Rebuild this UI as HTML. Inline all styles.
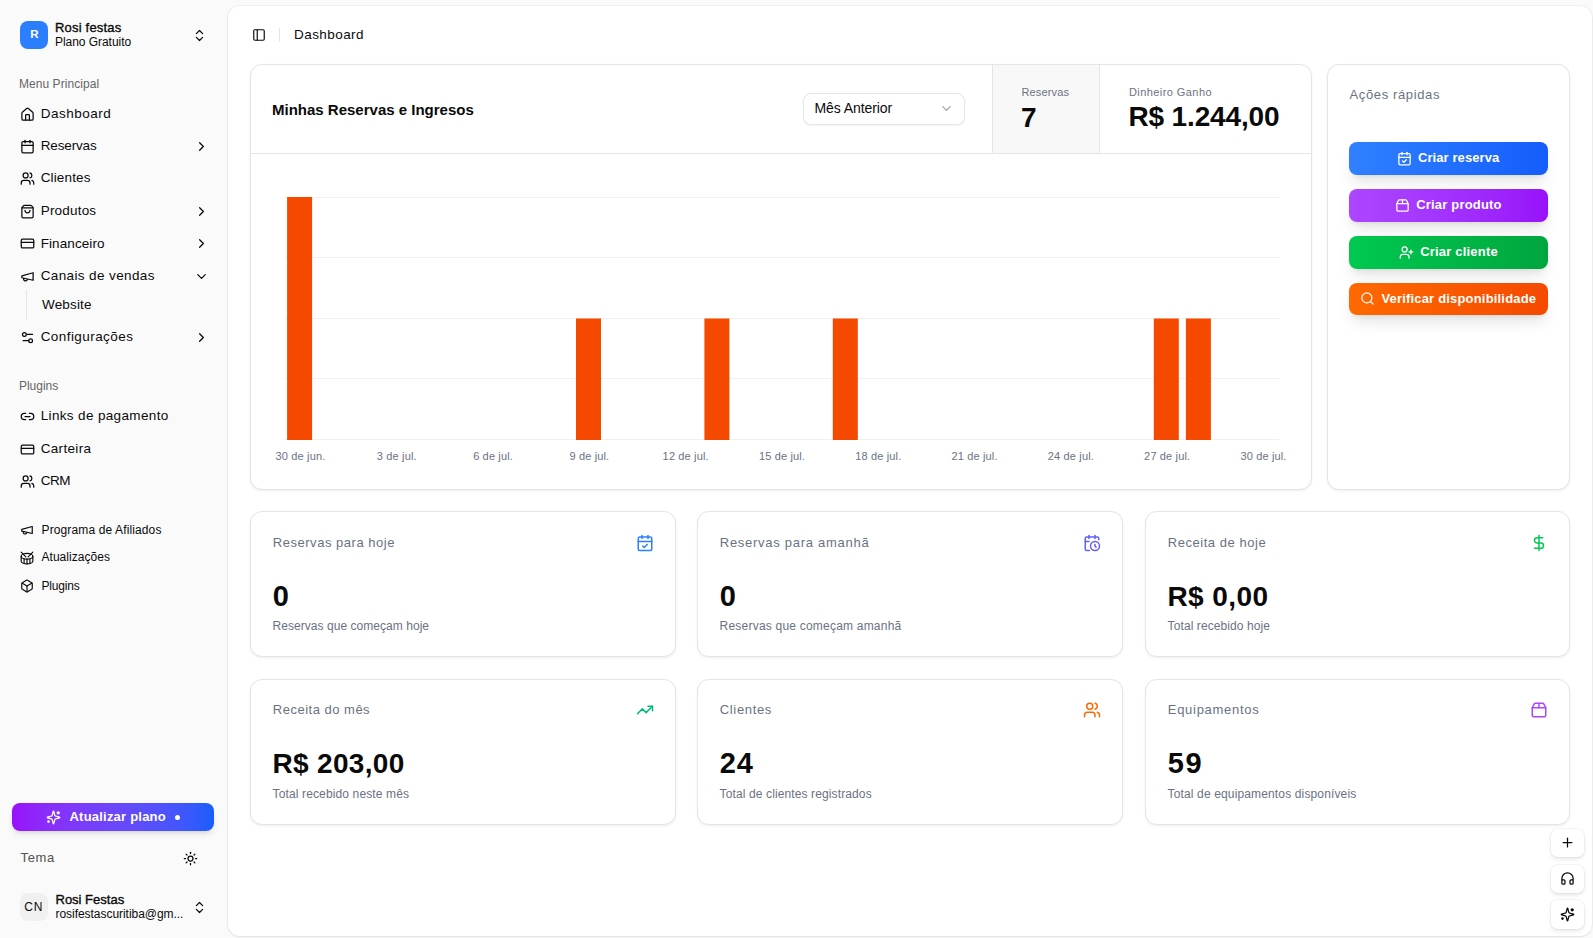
<!DOCTYPE html>
<html><head><meta charset="utf-8"><title>Dashboard</title>
<style>
html,body{margin:0;padding:0;}
body{width:1593px;height:938px;overflow:hidden;position:relative;background:#fafafa;font-family:"Liberation Sans",sans-serif;}
.t{position:absolute;line-height:1;white-space:nowrap;}
.ic{position:absolute;}
</style></head><body>
<div style="position:absolute;left:20px;top:21px;width:28px;height:28px;border-radius:8px;background:#2b7fff;"></div>
<div class="t" style="left:30.20px;top:29.34px;font-size:11.5px;font-weight:700;color:#fff;letter-spacing:0px;">R</div>
<div class="t" style="left:55.00px;top:21.08px;font-size:13px;font-weight:400;color:#0a0a0a;letter-spacing:0.2px;-webkit-text-stroke:0.35px #0a0a0a;">Rosi festas</div>
<div class="t" style="left:55.00px;top:35.92px;font-size:12px;font-weight:400;color:#0a0a0a;letter-spacing:-0.046px;">Plano Gratuito</div>
<svg class="ic" style="left:191.5px;top:27.5px" width="15" height="15" viewBox="0 0 24 24" fill="none" color="#0a0a0a" stroke="#0a0a0a" stroke-width="2" stroke-linecap="round" stroke-linejoin="round"><path d="m7 15 5 5 5-5"/><path d="m7 9 5-5 5 5"/></svg>
<div class="t" style="left:19.00px;top:77.92px;font-size:12px;font-weight:400;color:#666666;letter-spacing:0.054px;">Menu Principal</div>
<svg class="ic" style="left:19.5px;top:106.5px" width="15" height="15" viewBox="0 0 24 24" fill="none" color="#0a0a0a" stroke="#0a0a0a" stroke-width="2" stroke-linecap="round" stroke-linejoin="round"><path d="M15 21v-8a1 1 0 0 0-1-1h-4a1 1 0 0 0-1 1v8"/><path d="M3 10a2 2 0 0 1 .709-1.528l7-5.999a2 2 0 0 1 2.582 0l7 5.999A2 2 0 0 1 21 10v9a2 2 0 0 1-2 2H5a2 2 0 0 1-2-2z"/></svg>
<div class="t" style="left:40.70px;top:106.66px;font-size:13.5px;font-weight:400;color:#0a0a0a;letter-spacing:0.5px;">Dashboard</div>
<svg class="ic" style="left:19.5px;top:139.0px" width="15" height="15" viewBox="0 0 24 24" fill="none" color="#0a0a0a" stroke="#0a0a0a" stroke-width="2" stroke-linecap="round" stroke-linejoin="round"><path d="M8 2v4"/><path d="M16 2v4"/><rect width="18" height="18" x="3" y="4" rx="2"/><path d="M3 10h18"/></svg>
<div class="t" style="left:40.70px;top:139.16px;font-size:13.5px;font-weight:400;color:#0a0a0a;letter-spacing:-0.143px;">Reservas</div>
<svg class="ic" style="left:193.5px;top:139.0px" width="15" height="15" viewBox="0 0 24 24" fill="none" color="#0a0a0a" stroke="#0a0a0a" stroke-width="2" stroke-linecap="round" stroke-linejoin="round"><path d="m9 18 6-6-6-6"/></svg>
<svg class="ic" style="left:19.5px;top:171.2px" width="15" height="15" viewBox="0 0 24 24" fill="none" color="#0a0a0a" stroke="#0a0a0a" stroke-width="2" stroke-linecap="round" stroke-linejoin="round"><path d="M16 21v-2a4 4 0 0 0-4-4H6a4 4 0 0 0-4 4v2"/><path d="M16 3.128a4 4 0 0 1 0 7.744"/><path d="M22 21v-2a4 4 0 0 0-3-3.87"/><circle cx="9" cy="7" r="4"/></svg>
<div class="t" style="left:40.70px;top:171.36px;font-size:13.5px;font-weight:400;color:#0a0a0a;letter-spacing:0.143px;">Clientes</div>
<svg class="ic" style="left:19.5px;top:203.7px" width="15" height="15" viewBox="0 0 24 24" fill="none" color="#0a0a0a" stroke="#0a0a0a" stroke-width="2" stroke-linecap="round" stroke-linejoin="round"><path d="M16 10a4 4 0 0 1-8 0"/><path d="M3.103 6.034h17.794"/><path d="M3.4 5.467a2 2 0 0 0-.4 1.2V20a2 2 0 0 0 2 2h14a2 2 0 0 0 2-2V6.667a2 2 0 0 0-.4-1.2l-2-2.667A2 2 0 0 0 17 2H7a2 2 0 0 0-1.6.8z"/></svg>
<div class="t" style="left:40.70px;top:203.86px;font-size:13.5px;font-weight:400;color:#0a0a0a;letter-spacing:0.2px;">Produtos</div>
<svg class="ic" style="left:193.5px;top:203.7px" width="15" height="15" viewBox="0 0 24 24" fill="none" color="#0a0a0a" stroke="#0a0a0a" stroke-width="2" stroke-linecap="round" stroke-linejoin="round"><path d="m9 18 6-6-6-6"/></svg>
<svg class="ic" style="left:19.5px;top:236.4px" width="15" height="15" viewBox="0 0 24 24" fill="none" color="#0a0a0a" stroke="#0a0a0a" stroke-width="2" stroke-linecap="round" stroke-linejoin="round"><rect width="20" height="14" x="2" y="5" rx="2"/><line x1="2" x2="22" y1="10" y2="10"/></svg>
<div class="t" style="left:40.70px;top:236.56px;font-size:13.5px;font-weight:400;color:#0a0a0a;letter-spacing:0.089px;">Financeiro</div>
<svg class="ic" style="left:193.5px;top:236.4px" width="15" height="15" viewBox="0 0 24 24" fill="none" color="#0a0a0a" stroke="#0a0a0a" stroke-width="2" stroke-linecap="round" stroke-linejoin="round"><path d="m9 18 6-6-6-6"/></svg>
<svg class="ic" style="left:19.5px;top:268.6px" width="15" height="15" viewBox="0 0 24 24" fill="none" color="#0a0a0a" stroke="#0a0a0a" stroke-width="2" stroke-linecap="round" stroke-linejoin="round"><path d="m3 11 18-5v12L3 14v-3z"/><path d="M11.6 16.8a3 3 0 1 1-5.8-1.6"/></svg>
<div class="t" style="left:40.70px;top:268.76px;font-size:13.5px;font-weight:400;color:#0a0a0a;letter-spacing:0.38px;">Canais de vendas</div>
<svg class="ic" style="left:193.5px;top:268.6px" width="15" height="15" viewBox="0 0 24 24" fill="none" color="#0a0a0a" stroke="#0a0a0a" stroke-width="2" stroke-linecap="round" stroke-linejoin="round"><path d="m6 9 6 6 6-6"/></svg>
<div style="position:absolute;left:26px;top:290px;width:1px;height:29px;background:#e5e5e5"></div>
<div class="t" style="left:42.00px;top:297.66px;font-size:13.5px;font-weight:400;color:#0a0a0a;letter-spacing:0.167px;">Website</div>
<svg class="ic" style="left:19.5px;top:329.8px" width="15" height="15" viewBox="0 0 24 24" fill="none" color="#0a0a0a" stroke="#0a0a0a" stroke-width="2" stroke-linecap="round" stroke-linejoin="round"><path d="M20 7h-9"/><path d="M14 17H5"/><circle cx="17" cy="17" r="3"/><circle cx="7" cy="7" r="3"/></svg>
<div class="t" style="left:40.70px;top:329.96px;font-size:13.5px;font-weight:400;color:#0a0a0a;letter-spacing:0.433px;">Configurações</div>
<svg class="ic" style="left:193.5px;top:329.8px" width="15" height="15" viewBox="0 0 24 24" fill="none" color="#0a0a0a" stroke="#0a0a0a" stroke-width="2" stroke-linecap="round" stroke-linejoin="round"><path d="m9 18 6-6-6-6"/></svg>
<div class="t" style="left:19.00px;top:379.92px;font-size:12px;font-weight:400;color:#666666;letter-spacing:-0.033px;">Plugins</div>
<svg class="ic" style="left:19.5px;top:408.8px" width="15" height="15" viewBox="0 0 24 24" fill="none" color="#0a0a0a" stroke="#0a0a0a" stroke-width="2" stroke-linecap="round" stroke-linejoin="round"><path d="M9 17H7A5 5 0 0 1 7 7h2"/><path d="M15 7h2a5 5 0 1 1 0 10h-2"/><line x1="8" x2="16" y1="12" y2="12"/></svg>
<div class="t" style="left:40.70px;top:408.96px;font-size:13.5px;font-weight:400;color:#0a0a0a;letter-spacing:0.353px;">Links de pagamento</div>
<svg class="ic" style="left:19.5px;top:441.9px" width="15" height="15" viewBox="0 0 24 24" fill="none" color="#0a0a0a" stroke="#0a0a0a" stroke-width="2" stroke-linecap="round" stroke-linejoin="round"><rect width="20" height="14" x="2" y="5" rx="2"/><line x1="2" x2="22" y1="10" y2="10"/></svg>
<div class="t" style="left:40.70px;top:442.06px;font-size:13.5px;font-weight:400;color:#0a0a0a;letter-spacing:0.329px;">Carteira</div>
<svg class="ic" style="left:19.5px;top:473.8px" width="15" height="15" viewBox="0 0 24 24" fill="none" color="#0a0a0a" stroke="#0a0a0a" stroke-width="2" stroke-linecap="round" stroke-linejoin="round"><path d="M16 21v-2a4 4 0 0 0-4-4H6a4 4 0 0 0-4 4v2"/><path d="M16 3.128a4 4 0 0 1 0 7.744"/><path d="M22 21v-2a4 4 0 0 0-3-3.87"/><circle cx="9" cy="7" r="4"/></svg>
<div class="t" style="left:40.70px;top:473.96px;font-size:13.5px;font-weight:400;color:#0a0a0a;letter-spacing:-0.45px;">CRM</div>
<svg class="ic" style="left:20.2px;top:523.0px" width="14" height="14" viewBox="0 0 24 24" fill="none" color="#0a0a0a" stroke="#0a0a0a" stroke-width="2" stroke-linecap="round" stroke-linejoin="round"><path d="m3 11 18-5v12L3 14v-3z"/><path d="M11.6 16.8a3 3 0 1 1-5.8-1.6"/></svg>
<div class="t" style="left:41.50px;top:523.52px;font-size:12px;font-weight:400;color:#0a0a0a;letter-spacing:0.125px;">Programa de Afiliados</div>
<svg class="ic" style="left:20.2px;top:550.6999999999999px" width="14" height="14" viewBox="0 0 24 24" fill="none" color="#0a0a0a" stroke="#0a0a0a" stroke-width="2" stroke-linecap="round" stroke-linejoin="round"><path d="m2 2 8 8"/><path d="m22 2-8 8"/><ellipse cx="12" cy="9" rx="10" ry="5"/><path d="M7 13.4v7.9"/><path d="M12 14v8"/><path d="M17 13.4v7.9"/><path d="M2 9v8a10 5 0 0 0 20 0V9"/></svg>
<div class="t" style="left:41.50px;top:551.22px;font-size:12px;font-weight:400;color:#0a0a0a;letter-spacing:0.036px;">Atualizações</div>
<svg class="ic" style="left:20.2px;top:579.4px" width="14" height="14" viewBox="0 0 24 24" fill="none" color="#0a0a0a" stroke="#0a0a0a" stroke-width="2" stroke-linecap="round" stroke-linejoin="round"><path d="M21 8a2 2 0 0 0-1-1.73l-7-4a2 2 0 0 0-2 0l-7 4A2 2 0 0 0 3 8v8a2 2 0 0 0 1 1.73l7 4a2 2 0 0 0 2 0l7-4A2 2 0 0 0 21 16Z"/><path d="m3.3 7 8.7 5 8.7-5"/><path d="M12 22V12"/></svg>
<div class="t" style="left:41.50px;top:579.92px;font-size:12px;font-weight:400;color:#0a0a0a;letter-spacing:-0.167px;">Plugins</div>
<div style="position:absolute;left:12px;top:803px;width:202px;height:28px;border-radius:8px;background:linear-gradient(to right in oklab,#9810fa,#155dfc);box-shadow:0 4px 6px -1px rgba(0,0,0,.1),0 2px 4px -2px rgba(0,0,0,.1)"></div>
<svg class="ic" style="left:45.5px;top:809.5px" width="15" height="15" viewBox="0 0 24 24" fill="none" color="#fff" stroke="#fff" stroke-width="2" stroke-linecap="round" stroke-linejoin="round"><path d="M9.937 15.5A2 2 0 0 0 8.5 14.063l-6.135-1.582a.5.5 0 0 1 0-.962L8.5 9.936A2 2 0 0 0 9.937 8.5l1.582-6.135a.5.5 0 0 1 .963 0L14.063 8.5A2 2 0 0 0 15.5 9.937l6.135 1.581a.5.5 0 0 1 0 .964L15.5 14.063a2 2 0 0 0-1.437 1.437l-1.582 6.135a.5.5 0 0 1-.963 0z"/><circle cx="19.5" cy="4.5" r="1.6" fill="currentColor"/><circle cx="4" cy="18.5" r="1.1" fill="currentColor"/></svg>
<div class="t" style="left:69.50px;top:810.28px;font-size:13px;font-weight:700;color:#fff;letter-spacing:0.214px;">Atualizar plano</div>
<div style="position:absolute;left:175px;top:814.5px;width:5px;height:5px;border-radius:50%;background:#fff"></div>
<div class="t" style="left:20.50px;top:851.38px;font-size:13px;font-weight:400;color:#525252;letter-spacing:0.667px;">Tema</div>
<svg class="ic" style="left:182.5px;top:850.5px" width="15" height="15" viewBox="0 0 24 24" fill="none" color="#0a0a0a" stroke="#0a0a0a" stroke-width="2" stroke-linecap="round" stroke-linejoin="round"><circle cx="12" cy="12" r="4"/><path d="M12 2v2"/><path d="M12 20v2"/><path d="m4.93 4.93 1.41 1.41"/><path d="m17.66 17.66 1.41 1.41"/><path d="M2 12h2"/><path d="M20 12h2"/><path d="m6.34 17.66-1.41 1.41"/><path d="m19.07 4.93-1.41 1.41"/></svg>
<div style="position:absolute;left:20px;top:893px;width:28px;height:28px;border-radius:8px;background:#f0f0f0"></div>
<div class="t" style="left:24.20px;top:900.62px;font-size:12px;font-weight:400;color:#0a0a0a;letter-spacing:1.0px;">CN</div>
<div class="t" style="left:55.50px;top:893.08px;font-size:13px;font-weight:400;color:#0a0a0a;letter-spacing:0.0px;-webkit-text-stroke:0.35px #0a0a0a;">Rosi Festas</div>
<div class="t" style="left:55.50px;top:907.72px;font-size:12px;font-weight:400;color:#0a0a0a;letter-spacing:-0.043px;">rosifestascuritiba@gm...</div>
<svg class="ic" style="left:191.5px;top:899.5px" width="15" height="15" viewBox="0 0 24 24" fill="none" color="#0a0a0a" stroke="#0a0a0a" stroke-width="2" stroke-linecap="round" stroke-linejoin="round"><path d="m7 15 5 5 5-5"/><path d="m7 9 5-5 5 5"/></svg>
<div style="position:absolute;left:228px;top:6px;width:1364px;height:930px;border-radius:12px;background:#fff;box-shadow:0 1px 3px rgba(0,0,0,.08),0 0 0 1px rgba(0,0,0,.03)"></div>
<svg class="ic" style="left:252px;top:28px" width="14" height="14" viewBox="0 0 24 24" fill="none" color="#0a0a0a" stroke="#0a0a0a" stroke-width="2" stroke-linecap="round" stroke-linejoin="round"><rect width="18" height="18" x="3" y="3" rx="2"/><path d="M9 3v18"/></svg>
<div style="position:absolute;left:279px;top:28px;width:1px;height:14px;background:#e5e5e5"></div>
<div class="t" style="left:294.00px;top:27.66px;font-size:13.5px;font-weight:400;color:#0a0a0a;letter-spacing:0.438px;">Dashboard</div>
<div style="position:absolute;background:#fff;border:1px solid #e5e5e5;border-radius:12px;box-shadow:0 1px 3px rgba(0,0,0,.06),0 1px 2px -1px rgba(0,0,0,.06);box-sizing:border-box;left:250px;top:64px;width:1062px;height:426px;overflow:hidden"><div style="position:absolute;left:0;top:88px;width:100%;height:1px;background:#e5e5e5"></div><div style="position:absolute;left:741px;top:0;width:106px;height:88px;background:#f8f8f8;border-left:1px solid #e5e5e5;border-right:1px solid #e5e5e5"></div></div>
<div class="t" style="left:272.00px;top:101.50px;font-size:15px;font-weight:700;color:#0a0a0a;letter-spacing:0.0px;">Minhas Reservas e Ingresos</div>
<div style="position:absolute;left:803px;top:93px;width:162px;height:32px;box-sizing:border-box;border:1px solid #e5e5e5;border-radius:8px;background:#fff;box-shadow:0 1px 2px rgba(0,0,0,.05)"></div>
<div class="t" style="left:814.50px;top:101.44px;font-size:14px;font-weight:400;color:#0a0a0a;letter-spacing:-0.091px;">Mês Anterior</div>
<svg class="ic" style="left:938.5px;top:101px" width="15" height="15" viewBox="0 0 24 24" fill="none" color="#a3a3a3" stroke="#a3a3a3" stroke-width="2" stroke-linecap="round" stroke-linejoin="round"><path d="m6 9 6 6 6-6"/></svg>
<div class="t" style="left:1021.50px;top:86.86px;font-size:11px;font-weight:400;color:#6a7282;letter-spacing:0.143px;">Reservas</div>
<div class="t" style="left:1021.00px;top:103.88px;font-size:28px;font-weight:700;color:#0a0a0a;letter-spacing:0px;">7</div>
<div class="t" style="left:1129.00px;top:86.56px;font-size:11px;font-weight:400;color:#6a7282;letter-spacing:0.423px;">Dinheiro Ganho</div>
<div class="t" style="left:1128.50px;top:103.08px;font-size:28px;font-weight:700;color:#0a0a0a;letter-spacing:-0.15px;">R$ 1.244,00</div>
<svg style="position:absolute;left:0;top:0" width="1593" height="938"><line x1="284" x2="1279" y1="197.5" y2="197.5" stroke="#f0f0f0" stroke-width="1"/><line x1="284" x2="1279" y1="257.5" y2="257.5" stroke="#f0f0f0" stroke-width="1"/><line x1="284" x2="1279" y1="318.5" y2="318.5" stroke="#f0f0f0" stroke-width="1"/><line x1="284" x2="1279" y1="378.5" y2="378.5" stroke="#f0f0f0" stroke-width="1"/><line x1="284" x2="1279" y1="439.5" y2="439.5" stroke="#f0f0f0" stroke-width="1"/><rect x="287.1" y="197.0" width="25" height="243.0" fill="#f54900"/><rect x="576.0" y="318.5" width="25" height="121.5" fill="#f54900"/><rect x="704.4" y="318.5" width="25" height="121.5" fill="#f54900"/><rect x="832.8" y="318.5" width="25" height="121.5" fill="#f54900"/><rect x="1153.8" y="318.5" width="25" height="121.5" fill="#f54900"/><rect x="1185.9" y="318.5" width="25" height="121.5" fill="#f54900"/></svg>
<div class="t" style="left:240.5px;width:120px;text-align:center;top:450.66px;font-size:11px;color:#6a7282;letter-spacing:0.15px">30 de jun.</div>
<div class="t" style="left:336.8px;width:120px;text-align:center;top:450.66px;font-size:11px;color:#6a7282;letter-spacing:0.15px">3 de jul.</div>
<div class="t" style="left:433.1px;width:120px;text-align:center;top:450.66px;font-size:11px;color:#6a7282;letter-spacing:0.15px">6 de jul.</div>
<div class="t" style="left:529.4px;width:120px;text-align:center;top:450.66px;font-size:11px;color:#6a7282;letter-spacing:0.15px">9 de jul.</div>
<div class="t" style="left:625.7px;width:120px;text-align:center;top:450.66px;font-size:11px;color:#6a7282;letter-spacing:0.15px">12 de jul.</div>
<div class="t" style="left:722.0px;width:120px;text-align:center;top:450.66px;font-size:11px;color:#6a7282;letter-spacing:0.15px">15 de jul.</div>
<div class="t" style="left:818.3px;width:120px;text-align:center;top:450.66px;font-size:11px;color:#6a7282;letter-spacing:0.15px">18 de jul.</div>
<div class="t" style="left:914.6px;width:120px;text-align:center;top:450.66px;font-size:11px;color:#6a7282;letter-spacing:0.15px">21 de jul.</div>
<div class="t" style="left:1010.9px;width:120px;text-align:center;top:450.66px;font-size:11px;color:#6a7282;letter-spacing:0.15px">24 de jul.</div>
<div class="t" style="left:1107.2px;width:120px;text-align:center;top:450.66px;font-size:11px;color:#6a7282;letter-spacing:0.15px">27 de jul.</div>
<div class="t" style="left:1203.5px;width:120px;text-align:center;top:450.66px;font-size:11px;color:#6a7282;letter-spacing:0.15px">30 de jul.</div>
<div style="position:absolute;background:#fff;border:1px solid #e5e5e5;border-radius:12px;box-shadow:0 1px 3px rgba(0,0,0,.06),0 1px 2px -1px rgba(0,0,0,.06);box-sizing:border-box;left:1327px;top:64px;width:243px;height:426px"></div>
<div class="t" style="left:1349.50px;top:88.28px;font-size:13px;font-weight:400;color:#6a7282;letter-spacing:0.625px;">Ações rápidas</div>
<div style="position:absolute;left:1349px;top:142px;width:199px;height:32.5px;border-radius:8px;background:linear-gradient(to right in oklab,#3080ff,#155dfc);box-shadow:0 10px 15px -3px rgba(0,0,0,.1),0 4px 6px -4px rgba(0,0,0,.1)"></div>
<svg class="ic" style="left:1396.5px;top:150.75px" width="15" height="15" viewBox="0 0 24 24" fill="none" color="#fff" stroke="#fff" stroke-width="2" stroke-linecap="round" stroke-linejoin="round"><path d="M8 2v4"/><path d="M16 2v4"/><rect width="18" height="18" x="3" y="4" rx="2"/><path d="M3 10h18"/><path d="m9 16 2 2 4-4"/></svg>
<div class="t" style="left:1418.00px;top:151.18px;font-size:13px;font-weight:700;color:#fff;letter-spacing:0.083px;">Criar reserva</div>
<div style="position:absolute;left:1349px;top:189px;width:199px;height:32.5px;border-radius:8px;background:linear-gradient(to right in oklab,#ad46ff,#9810fa);box-shadow:0 10px 15px -3px rgba(0,0,0,.1),0 4px 6px -4px rgba(0,0,0,.1)"></div>
<svg class="ic" style="left:1394.8px;top:197.75px" width="15" height="15" viewBox="0 0 24 24" fill="none" color="#fff" stroke="#fff" stroke-width="2" stroke-linecap="round" stroke-linejoin="round"><path d="M3 9h18v10a2 2 0 0 1-2 2H5a2 2 0 0 1-2-2V9Z"/><path d="m3 9 2.45-4.9A2 2 0 0 1 7.24 3h9.52a2 2 0 0 1 1.8 1.1L21 9"/><path d="M12 3v6"/></svg>
<div class="t" style="left:1416.20px;top:198.18px;font-size:13px;font-weight:700;color:#fff;letter-spacing:0.192px;">Criar produto</div>
<div style="position:absolute;left:1349px;top:236px;width:199px;height:32.5px;border-radius:8px;background:linear-gradient(to right in oklab,#00c950,#00a63e);box-shadow:0 10px 15px -3px rgba(0,0,0,.1),0 4px 6px -4px rgba(0,0,0,.1)"></div>
<svg class="ic" style="left:1398.9px;top:244.75px" width="15" height="15" viewBox="0 0 24 24" fill="none" color="#fff" stroke="#fff" stroke-width="2" stroke-linecap="round" stroke-linejoin="round"><path d="M16 21v-2a4 4 0 0 0-4-4H6a4 4 0 0 0-4 4v2"/><circle cx="9" cy="7" r="4"/><line x1="19" x2="19" y1="8" y2="14"/><line x1="22" x2="16" y1="11" y2="11"/></svg>
<div class="t" style="left:1420.20px;top:245.18px;font-size:13px;font-weight:700;color:#fff;letter-spacing:0.192px;">Criar cliente</div>
<div style="position:absolute;left:1349px;top:282.5px;width:199px;height:32.5px;border-radius:8px;background:linear-gradient(to right in oklab,#ff6900,#f54900);box-shadow:0 10px 15px -3px rgba(0,0,0,.1),0 4px 6px -4px rgba(0,0,0,.1)"></div>
<svg class="ic" style="left:1359.5px;top:291.25px" width="15" height="15" viewBox="0 0 24 24" fill="none" color="#fff" stroke="#fff" stroke-width="2" stroke-linecap="round" stroke-linejoin="round"><circle cx="11" cy="11" r="8"/><path d="m21 21-4.3-4.3"/></svg>
<div class="t" style="left:1381.40px;top:291.68px;font-size:13px;font-weight:700;color:#fff;letter-spacing:0.183px;">Verificar disponibilidade</div>
<div style="position:absolute;background:#fff;border:1px solid #e5e5e5;border-radius:12px;box-shadow:0 1px 3px rgba(0,0,0,.06),0 1px 2px -1px rgba(0,0,0,.06);box-sizing:border-box;left:250px;top:511px;width:426px;height:146px"></div>
<div class="t" style="left:272.80px;top:535.68px;font-size:13px;font-weight:400;color:#6a7282;letter-spacing:0.529px;">Reservas para hoje</div>
<div class="t" style="left:272.80px;top:582.14px;font-size:29px;font-weight:700;color:#0a0a0a;letter-spacing:0px;">0</div>
<div class="t" style="left:272.60px;top:620.02px;font-size:12px;font-weight:400;color:#6a7282;letter-spacing:0.042px;">Reservas que começam hoje</div>
<svg class="ic" style="left:635.5px;top:533.8px" width="18" height="18" viewBox="0 0 24 24" fill="none" color="#2b7fff" stroke="#2b7fff" stroke-width="2" stroke-linecap="round" stroke-linejoin="round"><path d="M8 2v4"/><path d="M16 2v4"/><rect width="18" height="18" x="3" y="4" rx="2"/><path d="M3 10h18"/><path d="m9 16 2 2 4-4"/></svg>
<div style="position:absolute;background:#fff;border:1px solid #e5e5e5;border-radius:12px;box-shadow:0 1px 3px rgba(0,0,0,.06),0 1px 2px -1px rgba(0,0,0,.06);box-sizing:border-box;left:697px;top:511px;width:426px;height:146px"></div>
<div class="t" style="left:719.80px;top:535.68px;font-size:13px;font-weight:400;color:#6a7282;letter-spacing:0.726px;">Reservas para amanhã</div>
<div class="t" style="left:719.80px;top:582.14px;font-size:29px;font-weight:700;color:#0a0a0a;letter-spacing:0px;">0</div>
<div class="t" style="left:719.60px;top:620.02px;font-size:12px;font-weight:400;color:#6a7282;letter-spacing:0.212px;">Reservas que começam amanhã</div>
<svg class="ic" style="left:1082.5px;top:533.8px" width="18" height="18" viewBox="0 0 24 24" fill="none" color="#615fff" stroke="#615fff" stroke-width="2" stroke-linecap="round" stroke-linejoin="round"><path d="M21 7.5V6a2 2 0 0 0-2-2H5a2 2 0 0 0-2 2v14a2 2 0 0 0 2 2h3.5"/><path d="M16 2v4"/><path d="M8 2v4"/><path d="M3 10h5"/><path d="M17.5 17.5 16 16.3V14"/><circle cx="16" cy="16" r="6"/></svg>
<div style="position:absolute;background:#fff;border:1px solid #e5e5e5;border-radius:12px;box-shadow:0 1px 3px rgba(0,0,0,.06),0 1px 2px -1px rgba(0,0,0,.06);box-sizing:border-box;left:1145px;top:511px;width:425px;height:146px"></div>
<div class="t" style="left:1167.80px;top:535.68px;font-size:13px;font-weight:400;color:#6a7282;letter-spacing:0.536px;">Receita de hoje</div>
<div class="t" style="left:1167.40px;top:582.78px;font-size:28px;font-weight:700;color:#0a0a0a;letter-spacing:0.433px;">R$ 0,00</div>
<div class="t" style="left:1167.60px;top:620.02px;font-size:12px;font-weight:400;color:#6a7282;letter-spacing:0.094px;">Total recebido hoje</div>
<svg class="ic" style="left:1529.5px;top:533.8px" width="18" height="18" viewBox="0 0 24 24" fill="none" color="#00c950" stroke="#00c950" stroke-width="2" stroke-linecap="round" stroke-linejoin="round"><line x1="12" x2="12" y1="2" y2="22"/><path d="M17 5H9.5a3.5 3.5 0 0 0 0 7h5a3.5 3.5 0 0 1 0 7H6"/></svg>
<div style="position:absolute;background:#fff;border:1px solid #e5e5e5;border-radius:12px;box-shadow:0 1px 3px rgba(0,0,0,.06),0 1px 2px -1px rgba(0,0,0,.06);box-sizing:border-box;left:250px;top:679px;width:426px;height:146px"></div>
<div class="t" style="left:272.80px;top:703.08px;font-size:13px;font-weight:400;color:#6a7282;letter-spacing:0.5px;">Receita do mês</div>
<div class="t" style="left:272.40px;top:750.08px;font-size:28px;font-weight:700;color:#0a0a0a;letter-spacing:0.337px;">R$ 203,00</div>
<div class="t" style="left:272.60px;top:787.52px;font-size:12px;font-weight:400;color:#6a7282;letter-spacing:0.13px;">Total recebido neste mês</div>
<svg class="ic" style="left:635.5px;top:700.9px" width="18" height="18" viewBox="0 0 24 24" fill="none" color="#00bc7d" stroke="#00bc7d" stroke-width="2" stroke-linecap="round" stroke-linejoin="round"><polyline points="22 7 13.5 15.5 8.5 10.5 2 17"/><polyline points="16 7 22 7 22 13"/></svg>
<div style="position:absolute;background:#fff;border:1px solid #e5e5e5;border-radius:12px;box-shadow:0 1px 3px rgba(0,0,0,.06),0 1px 2px -1px rgba(0,0,0,.06);box-sizing:border-box;left:697px;top:679px;width:426px;height:146px"></div>
<div class="t" style="left:719.80px;top:703.08px;font-size:13px;font-weight:400;color:#6a7282;letter-spacing:0.643px;">Clientes</div>
<div class="t" style="left:719.80px;top:749.44px;font-size:29px;font-weight:700;color:#0a0a0a;letter-spacing:0.8px;">24</div>
<div class="t" style="left:719.60px;top:787.52px;font-size:12px;font-weight:400;color:#6a7282;letter-spacing:0.118px;">Total de clientes registrados</div>
<svg class="ic" style="left:1082.5px;top:700.9px" width="18" height="18" viewBox="0 0 24 24" fill="none" color="#ff6900" stroke="#ff6900" stroke-width="2" stroke-linecap="round" stroke-linejoin="round"><path d="M16 21v-2a4 4 0 0 0-4-4H6a4 4 0 0 0-4 4v2"/><path d="M16 3.128a4 4 0 0 1 0 7.744"/><path d="M22 21v-2a4 4 0 0 0-3-3.87"/><circle cx="9" cy="7" r="4"/></svg>
<div style="position:absolute;background:#fff;border:1px solid #e5e5e5;border-radius:12px;box-shadow:0 1px 3px rgba(0,0,0,.06),0 1px 2px -1px rgba(0,0,0,.06);box-sizing:border-box;left:1145px;top:679px;width:425px;height:146px"></div>
<div class="t" style="left:1167.80px;top:703.08px;font-size:13px;font-weight:400;color:#6a7282;letter-spacing:0.709px;">Equipamentos</div>
<div class="t" style="left:1167.80px;top:749.44px;font-size:29px;font-weight:700;color:#0a0a0a;letter-spacing:1.5px;">59</div>
<div class="t" style="left:1167.60px;top:787.52px;font-size:12px;font-weight:400;color:#6a7282;letter-spacing:0.141px;">Total de equipamentos disponíveis</div>
<svg class="ic" style="left:1529.5px;top:700.9px" width="18" height="18" viewBox="0 0 24 24" fill="none" color="#ad46ff" stroke="#ad46ff" stroke-width="2" stroke-linecap="round" stroke-linejoin="round"><path d="M3 9h18v10a2 2 0 0 1-2 2H5a2 2 0 0 1-2-2V9Z"/><path d="m3 9 2.45-4.9A2 2 0 0 1 7.24 3h9.52a2 2 0 0 1 1.8 1.1L21 9"/><path d="M12 3v6"/></svg>
<div style="position:absolute;left:1551px;top:828.5px;width:33px;height:28.5px;border-radius:7px;background:#fff;box-shadow:0 2px 4px rgba(0,0,0,.1),0 0 0 1px rgba(0,0,0,.03)"></div>
<svg class="ic" style="left:1560px;top:835.25px" width="15" height="15" viewBox="0 0 24 24" fill="none" color="#0a0a0a" stroke="#0a0a0a" stroke-width="2" stroke-linecap="round" stroke-linejoin="round"><path d="M5 12h14"/><path d="M12 5v14"/></svg>
<div style="position:absolute;left:1551px;top:864.5px;width:33px;height:28.5px;border-radius:7px;background:#fff;box-shadow:0 2px 4px rgba(0,0,0,.1),0 0 0 1px rgba(0,0,0,.03)"></div>
<svg class="ic" style="left:1560px;top:871.25px" width="15" height="15" viewBox="0 0 24 24" fill="none" color="#0a0a0a" stroke="#0a0a0a" stroke-width="2" stroke-linecap="round" stroke-linejoin="round"><path d="M3 14h3a2 2 0 0 1 2 2v3a2 2 0 0 1-2 2H5a2 2 0 0 1-2-2v-7a9 9 0 0 1 18 0v7a2 2 0 0 1-2 2h-1a2 2 0 0 1-2-2v-3a2 2 0 0 1 2-2h3"/></svg>
<div style="position:absolute;left:1551px;top:900px;width:33px;height:28.5px;border-radius:7px;background:#fff;box-shadow:0 2px 4px rgba(0,0,0,.1),0 0 0 1px rgba(0,0,0,.03)"></div>
<svg class="ic" style="left:1560px;top:906.75px" width="15" height="15" viewBox="0 0 24 24" fill="none" color="#0a0a0a" stroke="#0a0a0a" stroke-width="2" stroke-linecap="round" stroke-linejoin="round"><path d="M9.937 15.5A2 2 0 0 0 8.5 14.063l-6.135-1.582a.5.5 0 0 1 0-.962L8.5 9.936A2 2 0 0 0 9.937 8.5l1.582-6.135a.5.5 0 0 1 .963 0L14.063 8.5A2 2 0 0 0 15.5 9.937l6.135 1.581a.5.5 0 0 1 0 .964L15.5 14.063a2 2 0 0 0-1.437 1.437l-1.582 6.135a.5.5 0 0 1-.963 0z"/><circle cx="19.5" cy="4.5" r="1.6" fill="currentColor"/><circle cx="4" cy="18.5" r="1.1" fill="currentColor"/></svg>
</body></html>
